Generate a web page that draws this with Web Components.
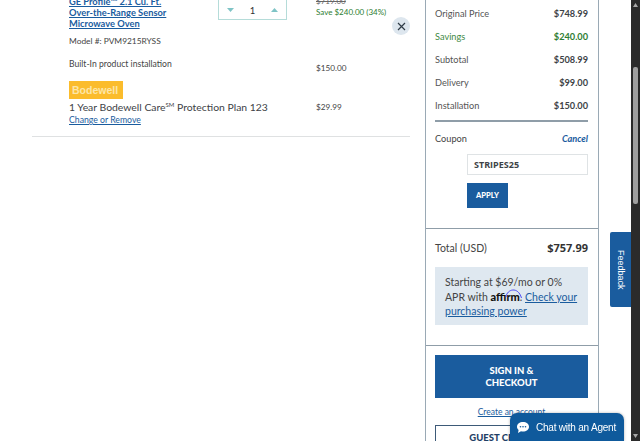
<!DOCTYPE html>
<html>
<head>
<meta charset="utf-8">
<title>Cart</title>
<style>
  html, body { margin: 0; height: 441px; overflow: hidden; background: #fff; }
  body { display: flex; font-family: Lato, "Open Sans", sans-serif; color: #3d4246; }
  cart-list { flex: 0 0 425px; }
  order-summary { flex: 0 0 174px; }
</style>
</head>
<body>
<cart-list>
  <cart-item></cart-item>
</cart-list>
<order-summary></order-summary>
<page-scrollbar></page-scrollbar>
<feedback-tab></feedback-tab>
<chat-widget></chat-widget>

<script>
const BLUE = '#1a5c9e';

class QtyStepper extends HTMLElement {
  constructor() {
    super();
    const shadow = this.attachShadow({ mode: 'open' });
    shadow.innerHTML = `
      <style>
        :host {
          display: flex;
          align-items: center;
          justify-content: space-between;
          box-sizing: border-box;
          width: 69px;
          height: 20px;
          padding: 1px 8px 0 8px;
          border: 1px solid #b5dcd9;
          border-top: 0;
          font-size: 9.5px;
          color: #333;
        }
        svg { display: block; }
      </style>
      <svg width="7" height="4" viewBox="0 0 7 4"><path d="M0 0h7L3.5 4z" fill="#7fc4c6"/></svg>
      <span>1</span>
      <svg width="7" height="4" viewBox="0 0 7 4"><path d="M0 4h7L3.5 0z" fill="#7fc4c6"/></svg>
    `;
  }
}
customElements.define('qty-stepper', QtyStepper);

class CartItem extends HTMLElement {
  constructor() {
    super();
    const shadow = this.attachShadow({ mode: 'open' });
    shadow.innerHTML = `
      <style>
        :host {
          display: grid;
          grid-template-columns: 149px 69px 1fr;
          position: relative;
          padding-left: 37px;
          font-size: 8.7px;
          color: #444;
        }
        a { color: ${BLUE}; }
        .name {
          margin-top: -4px;
          font-size: 9.3px;
          line-height: 11px;
          font-weight: 700;
        }
        .price { margin-left: 29px; margin-top: -4px; line-height: 11px; font-size: 8px; }
        .was { text-decoration: line-through; color: #666; }
        .save { color: #2e7d32; }
        .model { grid-column: 1 / 3; margin-top: 7px; line-height: 11px; font-size: 8.4px; }
        .install { grid-column: 1 / 3; margin-top: 12px; line-height: 11px; font-size: 8.6px; }
        .install-price { margin-left: 29px; margin-top: 16px; line-height: 11px; grid-column: 3; grid-row: 3; font-size: 8.2px; }
        .badge {
          grid-column: 1 / 3;
          box-sizing: border-box;
          width: 54px;
          height: 18px;
          margin-top: 7px;
          padding-left: 3px;
          background: #fbbc2c;
          color: #fde6a8;
          font: 700 10.5px/18px "Liberation Sans", sans-serif;
        }
        .plan { grid-column: 1 / 3; margin-top: 1px; font-size: 10.4px; line-height: 14px; color: #3d4246; }
        .plan sup { font-size: 6px; line-height: 0; }
        .plan-price { margin-left: 29px; margin-top: 1px; line-height: 14px; font-size: 8.2px; }
        .change { grid-column: 1 / 3; margin-top: 0; font-size: 8.7px; line-height: 11px; }
        .rule {
          grid-column: 1 / -1;
          height: 1px;
          margin: 11px 15px 0 -37px;
          background: #dfe1e2;
        }
        .close {
          position: absolute;
          left: 360px;
          top: 17px;
          width: 18px;
          height: 18px;
          border-radius: 50%;
          background: #dde6ee;
          display: flex;
          align-items: center;
          justify-content: center;
        }
      </style>
      <div class="name"><a href="#">GE Profile™ 2.1 Cu. Ft.<br>Over-the-Range Sensor<br>Microwave Oven</a></div>
      <qty-stepper></qty-stepper>
      <div class="price"><div class="was">$719.00</div><div class="save">Save $240.00 (34%)</div></div>
      <div class="model">Model #: PVM9215RYSS</div>
      <div class="install">Built-In product installation</div>
      <div class="install-price">$150.00</div>
      <div class="badge">Bodewell</div>
      <div class="plan">1 Year Bodewell Care<sup>SM</sup> Protection Plan 123</div>
      <div class="plan-price">$29.99</div>
      <div class="change"><a href="#">Change or Remove</a></div>
      <div class="rule"></div>
      <div class="close">
        <svg width="9" height="9" viewBox="0 0 9 9"><path d="M1 1l7 7M8 1L1 8" stroke="#2f3b46" stroke-width="1.2" fill="none"/></svg>
      </div>
    `;
  }
}
customElements.define('cart-item', CartItem);

class CartList extends HTMLElement {
  constructor() {
    super();
    const shadow = this.attachShadow({ mode: 'open' });
    shadow.innerHTML = `
      <style>
        :host { display: block; padding-left: 32px; box-sizing: border-box; }
      </style>
      <slot></slot>
    `;
  }
}
customElements.define('cart-list', CartList);

class SummaryRow extends HTMLElement {
  constructor() {
    super();
    const shadow = this.attachShadow({ mode: 'open' });
    shadow.innerHTML = `
      <style>
        :host {
          display: flex;
          justify-content: space-between;
          align-items: center;
          height: 23px;
          font-size: 9.2px;
          color: #555;
        }
        :host([green]) { color: #3f8a45; }
        .val { font-weight: 700; color: #3d4246; }
        :host([green]) .val { color: #2e7d32; }
      </style>
      <span><slot></slot></span>
      <span class="val">${this.getAttribute('value') || ''}</span>
    `;
  }
}
customElements.define('summary-row', SummaryRow);

class OrderSummary extends HTMLElement {
  constructor() {
    super();
    const shadow = this.attachShadow({ mode: 'open' });
    shadow.innerHTML = `
      <style>
        :host {
          display: block;
          box-sizing: border-box;
          height: 441px;
          border-left: 1px solid #9aa9b5;
          border-right: 1px solid #9aa9b5;
          color: #444;
          font-size: 9.2px;
        }
        section { padding: 0 10px 0 9px; border-bottom: 1px solid #8f9da8; }
        .totals { height: 229px; padding-top: 2px; box-sizing: border-box; }
        .divider { height: 2px; margin-top: 3px; background: #8f9da8; }
        .coupon { display: flex; justify-content: space-between; align-items: center; height: 32px; }
        .coupon a { color: ${BLUE}; font-weight: 700; font-style: italic; text-decoration: none; }
        .code {
          box-sizing: border-box;
          width: 121px;
          height: 21px;
          margin-left: 32px;
          padding-left: 6px;
          border: 1px solid #dfe3e5;
          font: 700 9px/19px "Open Sans", sans-serif;
          color: #3d4246;
        }
        .apply {
          width: 41px;
          height: 25px;
          margin: 8px 0 0 32px;
          background: ${BLUE};
          color: #fff;
          font-size: 7.5px;
          font-weight: 900;
          text-align: center;
          line-height: 25px;
        }
        .pay { height: 117px; box-sizing: border-box; padding-top: 9px; }
        .total { display: flex; justify-content: space-between; align-items: center; height: 19px; font-size: 10.5px; }
        .total b { font: 700 11px "Open Sans", sans-serif; color: #333; }
        .affirm {
          margin-top: 10px;
          height: 58px;
          box-sizing: border-box;
          padding: 8px 9px 0 10px;
          background: #dfe8f0;
          font-size: 10.5px;
          line-height: 14.5px;
          color: #444;
        }
        .affirm a { color: ${BLUE}; }
        .logo { position: relative; font-weight: 900; color: #111; font-size: 11px; }
        .logo svg { position: absolute; left: 14px; top: -3px; }
        .checkout { padding-top: 9px; border: 0; }
        .sign {
          height: 43px;
          background: ${BLUE};
          color: #fff;
          font-weight: 900;
          font-size: 9.5px;
          line-height: 12px;
          display: flex;
          align-items: center;
          justify-content: center;
          text-align: center;
        }
        .create { display: block; text-align: center; margin-top: 9px; font-size: 8.5px; line-height: 11px; color: ${BLUE}; }
        .guest {
          box-sizing: border-box;
          height: 36px;
          margin-top: 7px;
          border: 1px solid #3d5a78;
          text-align: center;
          color: #1f3f66;
          font-weight: 900;
          font-size: 9.5px;
          padding-top: 6px;
        }
      </style>
      <section class="totals">
        <summary-row value="$748.99">Original Price</summary-row>
        <summary-row value="$240.00" green>Savings</summary-row>
        <summary-row value="$508.99">Subtotal</summary-row>
        <summary-row value="$99.00">Delivery</summary-row>
        <summary-row value="$150.00">Installation</summary-row>
        <div class="divider"></div>
        <div class="coupon"><span>Coupon</span><a href="#">Cancel</a></div>
        <div class="code">STRIPES25</div>
        <div class="apply">APPLY</div>
      </section>
      <section class="pay">
        <div class="total"><span>Total (USD)</span><b>$757.99</b></div>
        <div class="affirm">Starting at $69/mo or 0% APR with <span class="logo">affirm<svg width="18" height="12" viewBox="0 0 18 12"><path d="M1 10C2 2 13-1 16.500 11" stroke="#4a4af4" stroke-width="1" fill="none"/></svg></span>. <a href="#">Check your purchasing power</a></div>
      </section>
      <section class="checkout">
        <div class="sign">SIGN IN &amp;<br>CHECKOUT</div>
        <a class="create" href="#">Create an account</a>
        <div class="guest">GUEST CHECKOUT</div>
      </section>
    `;
  }
}
customElements.define('order-summary', OrderSummary);

class PageScrollbar extends HTMLElement {
  constructor() {
    super();
    const shadow = this.attachShadow({ mode: 'open' });
    shadow.innerHTML = `
      <style>
        :host {
          display: flex;
          flex-direction: column;
          align-items: center;
          box-sizing: border-box;
          width: 9px;
          height: 441px;
          margin-left: 32px;
          padding: 3px 0;
          background: #2b2b2b;
        }
        .thumb { width: 5px; height: 137px; margin-top: 60px; border-radius: 2px; background: #a0a0a0; }
        svg { display: block; flex: none; }
        .down { margin-top: auto; }
      </style>
      <svg width="5" height="4" viewBox="0 0 5 4"><path d="M0 4h5L2.500 0z" fill="#a8a8a8"/></svg>
      <div class="thumb"></div>
      <svg class="down" width="5" height="4" viewBox="0 0 5 4"><path d="M0 0h5L2.500 4z" fill="#a8a8a8"/></svg>
    `;
  }
}
customElements.define('page-scrollbar', PageScrollbar);

class FeedbackTab extends HTMLElement {
  constructor() {
    super();
    const shadow = this.attachShadow({ mode: 'open' });
    shadow.innerHTML = `
      <style>
        :host {
          position: fixed;
          left: 610px;
          top: 232px;
          width: 21px;
          height: 75px;
          display: flex;
          align-items: center;
          justify-content: center;
          background: ${BLUE};
          border-radius: 2px 0 0 2px;
          color: #fff;
          font: 9px "Liberation Sans", sans-serif;
        }
        span { writing-mode: vertical-rl; }
      </style>
      <span>Feedback</span>
    `;
  }
}
customElements.define('feedback-tab', FeedbackTab);

class ChatWidget extends HTMLElement {
  constructor() {
    super();
    const shadow = this.attachShadow({ mode: 'open' });
    shadow.innerHTML = `
      <style>
        :host {
          position: fixed;
          left: 510px;
          top: 413px;
          width: 114px;
          height: 28px;
          box-sizing: border-box;
          padding-left: 7px;
          display: flex;
          align-items: center;
          gap: 7px;
          background: #0f5a9c;
          border-radius: 7px 7px 0 0;
          color: #fff;
          font: 10px "Liberation Sans", sans-serif;
          letter-spacing: -0.22px;
          white-space: nowrap;
          box-shadow: 0 0 3px rgba(0,0,0,.3);
        }
        svg { display: block; flex: none; }
      </style>
      <svg width="12" height="11" viewBox="0 0 12 11">
        <path d="M6 0C2.700 0 0 2.100 0 4.700c0 1.300.6 2.400 1.600 3.200L1 11l3-1.700c.6.1 1.300.2 2 .2 3.300 0 6-2.100 6-4.800S9.300 0 6 0z" fill="#fff"/>
        <circle cx="3.500" cy="4.700" r=".8" fill="#0f5a9c"/><circle cx="6" cy="4.700" r=".8" fill="#0f5a9c"/><circle cx="8.500" cy="4.700" r=".8" fill="#0f5a9c"/>
      </svg>
      <span>Chat with an Agent</span>
    `;
  }
}
customElements.define('chat-widget', ChatWidget);
</script>
</body>
</html>
